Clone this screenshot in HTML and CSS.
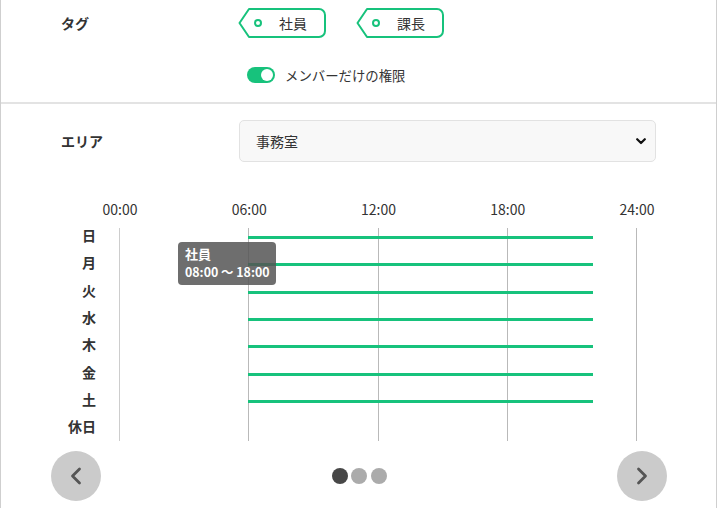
FILE: index.html
```html
<!DOCTYPE html>
<html lang="ja">
<head>
<meta charset="utf-8">
<title>Schedule</title>
<link rel="stylesheet" href="styles.css">
</head>
<body>
<div class="panel">
  <section class="top">
    <div class="tags-row">
      <div class="field-label">タグ</div>
      <div class="tags">
        <span class="tag">
          <svg class="tag-shape" viewBox="0 0 88 30" width="88" height="30"><path d="M1.5 15 L11 1 H81 A6 6 0 0 1 87 7 V23 A6 6 0 0 1 81 29 H11 Z" fill="none" stroke="#17c27c" stroke-width="2" stroke-linejoin="round"/><circle cx="20" cy="15" r="3" fill="none" stroke="#17c27c" stroke-width="2"/></svg>
          <span class="tag-text">社員</span>
        </span>
        <span class="tag">
          <svg class="tag-shape" viewBox="0 0 88 30" width="88" height="30"><path d="M1.5 15 L11 1 H81 A6 6 0 0 1 87 7 V23 A6 6 0 0 1 81 29 H11 Z" fill="none" stroke="#17c27c" stroke-width="2" stroke-linejoin="round"/><circle cx="20" cy="15" r="3" fill="none" stroke="#17c27c" stroke-width="2"/></svg>
          <span class="tag-text">課長</span>
        </span>
      </div>
    </div>
    <div class="toggle-row">
      <span class="toggle"><span class="knob"></span></span>
      <span class="toggle-text">メンバーだけの権限</span>
    </div>
  </section>

  <section class="area-row">
    <div class="field-label">エリア</div>
    <div class="select-wrap">
      <select class="select"><option>事務室</option></select>
      <svg class="select-chevron" viewBox="0 0 10 7" width="10" height="7"><path d="M1.2 1.2 L5 5 L8.8 1.2" fill="none" stroke="#111" stroke-width="2.2" stroke-linecap="round" stroke-linejoin="round"/></svg>
    </div>
  </section>

  <section class="chart">
    <div class="axis">
      <span class="tick">00:00</span>
      <span class="tick">06:00</span>
      <span class="tick">12:00</span>
      <span class="tick">18:00</span>
      <span class="tick">24:00</span>
    </div>
    <div class="chart-body">
      <div class="days">
        <div class="day">日</div>
        <div class="day">月</div>
        <div class="day">火</div>
        <div class="day">水</div>
        <div class="day">木</div>
        <div class="day">金</div>
        <div class="day">土</div>
        <div class="day">休日</div>
      </div>
      <div class="plot">
        <div class="gridlines">
          <span class="gl"></span><span class="gl"></span><span class="gl"></span><span class="gl"></span><span class="gl"></span>
        </div>
        <div class="track"><span class="bar" style="left:25%;width:66.667%"></span></div>
        <div class="track"><span class="bar" style="left:25%;width:66.667%"></span></div>
        <div class="track"><span class="bar" style="left:25%;width:66.667%"></span></div>
        <div class="track"><span class="bar" style="left:25%;width:66.667%"></span></div>
        <div class="track"><span class="bar" style="left:25%;width:66.667%"></span></div>
        <div class="track"><span class="bar" style="left:25%;width:66.667%"></span></div>
        <div class="track"><span class="bar" style="left:25%;width:66.667%"></span></div>
        <div class="track"></div>
        <div class="tooltip">
          <div>社員</div>
          <div class="tooltip-time">08:00 〜 18:00</div>
        </div>
      </div>
    </div>
  </section>

  <section class="carousel">
    <button class="nav" aria-label="前へ"><svg viewBox="0 0 50 50" width="50" height="50"><path d="M28.5 18 L21.5 25 L28.5 32" fill="none" stroke="#555" stroke-width="2.8" stroke-linecap="round" stroke-linejoin="round"/></svg></button>
    <div class="dots">
      <span class="dot active"></span><span class="dot"></span><span class="dot"></span>
    </div>
    <button class="nav" aria-label="次へ"><svg viewBox="0 0 50 50" width="50" height="50"><path d="M21.5 18 L28.5 25 L21.5 32" fill="none" stroke="#555" stroke-width="2.8" stroke-linecap="round" stroke-linejoin="round"/></svg></button>
  </section>
</div>
</body>
</html>
```

FILE: styles.css
```css
* { box-sizing: border-box; }

body {
  margin: 0;
  background: #fff;
  color: #333;
  font-family: "Noto Sans CJK JP", "Noto Sans", sans-serif;
}

.panel {
  width: 717px;
  height: 508px;
  border-left: 1px solid #cfcfcf;
  border-right: 1px solid #cfcfcf;
  overflow: hidden;
}

.field-label {
  width: 178px;
  flex: none;
  font-size: 14px;
  font-weight: 700;
  line-height: 20px;
}

/* top section */
.top {
  height: 104px;
  padding: 8px 60px 0;
  border-bottom: 2px solid #e3e3e3;
}

.tags-row {
  display: flex;
  align-items: center;
  height: 30px;
}

.tags {
  display: flex;
  gap: 30px;
  margin-left: -1px;
}

.tag {
  position: relative;
  width: 88px;
  height: 30px;
  display: flex;
  align-items: center;
  padding-left: 41px;
  font-size: 14px;
}

.tag-shape {
  position: absolute;
  left: 0;
  top: 0;
}

.tag-text { position: relative; line-height: 20px; }

.toggle-row {
  display: flex;
  align-items: center;
  height: 16px;
  margin-top: 29px;
  padding-left: 186px;
}

.toggle {
  width: 28px;
  height: 16px;
  border-radius: 8px;
  background: #17c27c;
  display: flex;
  align-items: center;
  justify-content: flex-end;
  padding-right: 2px;
}

.knob {
  width: 12px;
  height: 12px;
  border-radius: 50%;
  background: #fff;
}

.toggle-text {
  margin-left: 10px;
  font-size: 13.4px;
  line-height: 18px;
}

/* area */
.area-row {
  display: flex;
  align-items: center;
  padding: 16px 60px 0;
}

.select-wrap {
  position: relative;
  width: 417px;
  height: 42px;
}

.select {
  width: 100%;
  height: 100%;
  appearance: none;
  -webkit-appearance: none;
  background: #f8f8f8;
  border: 1px solid #e2e2e2;
  border-radius: 5px;
  padding: 0 30px 0 16px;
  font-family: inherit;
  font-size: 14px;
  color: #333;
  outline: none;
}

.select-chevron {
  position: absolute;
  right: 10px;
  top: 18px;
  pointer-events: none;
}

/* chart */
.chart {
  margin-top: 38px;
}

.axis {
  display: flex;
  justify-content: space-between;
  width: 517px;
  margin-left: 119px;
  height: 18px;
}

.tick {
  width: 0;
  display: flex;
  justify-content: center;
  white-space: nowrap;
  font-size: 14px;
  line-height: 18px;
  color: #333;
}

.chart-body {
  display: grid;
  grid-template-columns: 95px 517px;
  column-gap: 23px;
  margin-top: 6px;
}

.day {
  height: 27.3px;
  display: flex;
  align-items: center;
  justify-content: flex-end;
  padding-bottom: 5px;
  font-size: 14px;
  font-weight: 700;
}

.plot {
  position: relative;
}

.gridlines {
  position: absolute;
  top: 4px;
  bottom: 1px;
  left: 0;
  width: 518px;
  display: flex;
  justify-content: space-between;
}

.gl {
  width: 1px;
  background: #b9b9b9;
}

.gl:first-child { background: #cdcdcd; }

.track {
  position: relative;
  height: 27.3px;
}

.bar {
  position: absolute;
  top: 50%;
  height: 3px;
  margin-top: -1.5px;
  background: #17c27c;
}

.tooltip {
  position: absolute;
  left: 59px;
  top: 18px;
  width: 98px;
  height: 43px;
  padding: 3px 7px 4px;
  border-radius: 4px;
  background: rgba(85, 85, 85, 0.85);
  color: #fff;
  font-size: 13px;
  font-weight: 700;
  line-height: 18px;
  white-space: nowrap;
}

.tooltip-time { font-size: 12.4px; }

/* carousel */
.carousel {
  display: flex;
  align-items: center;
  justify-content: space-between;
  margin-top: 9px;
  padding: 0 49px 0 50px;
}

.nav {
  width: 50px;
  height: 50px;
  border: none;
  border-radius: 50%;
  background: #cbcbcb;
  padding: 0;
  display: flex;
}

.dots {
  display: flex;
  gap: 3.5px;
}

.dot {
  width: 16px;
  height: 16px;
  border-radius: 50%;
  background: #ababab;
}

.dot.active { background: #474747; }
```
